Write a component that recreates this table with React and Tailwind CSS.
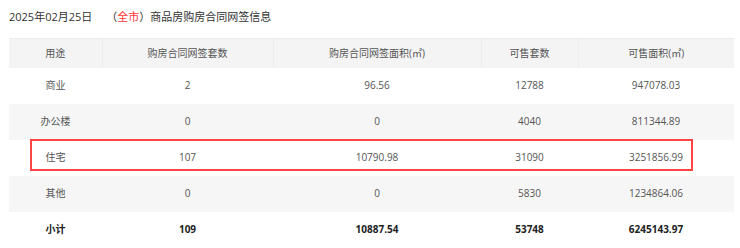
import React from "react";

const rows = [
  { name: "商业", count: "2", area: "96.56", avail: "12788", availArea: "947078.03" },
  { name: "办公楼", count: "0", area: "0", avail: "4040", availArea: "811344.89" },
  { name: "住宅", count: "107", area: "10790.98", avail: "31090", availArea: "3251856.99" },
  { name: "其他", count: "0", area: "0", avail: "5830", availArea: "1234864.06" },
];

const headers = ["用途", "购房合同网签套数", "购房合同网签面积(㎡)", "可售套数", "可售面积(㎡)"];
const widths = ["w-[93px]", "w-[171px]", "w-[208px]", "w-[97px]", "w-[156px]"];

export default function App() {
  return (
    <div
      className="w-[740px] h-[248px] bg-white px-[9px] overflow-hidden text-[#555]"
      style={{ fontFamily: '"Open Sans", "Noto Sans CJK SC", sans-serif' }}
    >
      {/* Title */}
      <div className="h-[38px] pt-[8px] text-[11px] leading-[18px] text-[#333]">
        2025年02月25日
        <span className="ml-[14px]">（</span>
        <span className="text-[#f33]">全市</span>
        <span>）商品房购房合同网签信息</span>
      </div>

      <div className="relative w-[725px]">
        <table className="table-fixed w-[725px] border-collapse text-[10px]">
          <colgroup>
            {widths.map((w, i) => (
              <col key={i} className={w} />
            ))}
          </colgroup>
          <thead>
            <tr className="h-[29px] bg-[#f4f4f4]">
              {headers.map((h, i) => (
                <th
                  key={h}
                  className={`font-normal text-center text-[#555] border-t border-[#ececec] ${
                    i < headers.length - 1 ? "border-r" : ""
                  }`}
                >
                  {h}
                </th>
              ))}
            </tr>
          </thead>
          <tbody>
            {rows.map((r, i) => (
              <tr key={r.name} className={`h-[36px] ${i % 2 === 1 ? "bg-[#f6f6f6]" : "bg-white"}`}>
                <td className="text-center">{r.name}</td>
                <td className="text-center">{r.count}</td>
                <td className="text-center">{r.area}</td>
                <td className="text-center">{r.avail}</td>
                <td className="text-center">{r.availArea}</td>
              </tr>
            ))}
            <tr className="h-[36px] font-bold text-[#222]">
              <td className="text-center">小计</td>
              <td className="text-center">109</td>
              <td className="text-center">10887.54</td>
              <td className="text-center">53748</td>
              <td className="text-center">6245143.97</td>
            </tr>
          </tbody>
        </table>

        {/* highlight box over 住宅 row */}
        <div className="absolute left-[21px] top-[101px] w-[663px] h-[32px] border-2 border-[#f44] pointer-events-none" />
      </div>
    </div>
  );
}
